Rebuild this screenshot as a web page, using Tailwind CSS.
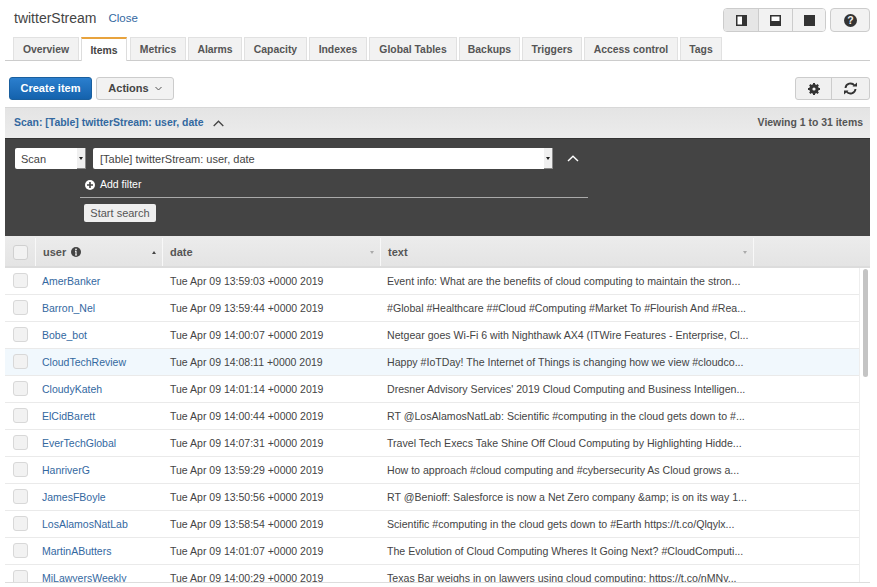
<!DOCTYPE html>
<html lang="en">
<head>
    <meta charset="UTF-8">
    <title>twitterStream</title>
    <script src="https://cdn.jsdelivr.net/npm/@tailwindcss/browser@4"></script>
</head>
<body class="bg-white font-['Liberation_Sans',Arial,sans-serif] text-[#444]">
<div class="w-[877px] h-[587px] overflow-hidden pl-[5px] pr-[7px]">

    <!-- Title bar -->
    <div class="h-[36px] flex items-start">
        <div class="flex items-center h-[36px] pl-[9px]">
            <span class="text-[14px] text-[#444]">twitterStream</span>
            <span class="text-[11.5px] pt-[2px] text-[#33689f] ml-[12px]">Close</span>
        </div>
        <div class="ml-auto mt-[8px] flex gap-[4px]">
            <div class="flex h-[24px] w-[103px] rounded-[4px] border border-[#ccc] overflow-hidden">
                <div class="w-[35px] bg-[#e6e6e6] flex items-center justify-center border-r border-[#ccc]">
                    <svg width="11" height="11" viewBox="0 0 11 11"><rect x="0.75" y="0.75" width="9.5" height="9.5" fill="#fff" stroke="#333" stroke-width="1.5"/><rect x="6" y="0" width="5" height="11" fill="#333"/></svg>
                </div>
                <div class="w-[34px] bg-[#f2f2f2] flex items-center justify-center border-r border-[#ccc]">
                    <svg width="11" height="11" viewBox="0 0 11 11"><rect x="0.75" y="0.75" width="9.5" height="9.5" fill="#fff" stroke="#333" stroke-width="1.5"/><rect x="0" y="6" width="11" height="5" fill="#333"/></svg>
                </div>
                <div class="flex-1 bg-[#f2f2f2] flex items-center justify-center">
                    <svg width="11" height="11" viewBox="0 0 11 11"><rect width="11" height="11" fill="#333"/></svg>
                </div>
            </div>
            <div class="h-[24px] w-[40px] rounded-[4px] border border-[#ccc] bg-[#f2f2f2] flex items-center justify-center">
                <svg width="13" height="13" viewBox="0 0 13 13"><circle cx="6.5" cy="6.5" r="6.5" fill="#333"/><text x="6.5" y="10.2" text-anchor="middle" fill="#f2f2f2" font-size="10.5" font-weight="700" font-family="Liberation Sans">?</text></svg>
            </div>
        </div>
    </div>

    <!-- Tabs -->
    <div class="h-[25px] flex items-end gap-[2px] pl-[8px] border-b border-[#ccc] text-[10.4px] font-bold text-[#555]">
        <div class="w-[66px] h-[23px] pt-[2px] bg-[#f2f2f2] border border-b-0 border-[#e1e1e1] flex items-center justify-center">Overview</div>
        <div class="w-[46px] h-[24px] pt-[2px] -mb-px bg-white border-t-2 border-t-[#e8a33d] border-x border-x-[#ddd] flex items-center justify-center text-[#444]">Items</div>
        <div class="ml-px w-[56px] h-[23px] pt-[2px] bg-[#f2f2f2] border border-b-0 border-[#e1e1e1] flex items-center justify-center">Metrics</div>
        <div class="w-[54px] h-[23px] pt-[2px] bg-[#f2f2f2] border border-b-0 border-[#e1e1e1] flex items-center justify-center">Alarms</div>
        <div class="w-[63px] h-[23px] pt-[2px] bg-[#f2f2f2] border border-b-0 border-[#e1e1e1] flex items-center justify-center">Capacity</div>
        <div class="w-[58px] h-[23px] pt-[2px] bg-[#f2f2f2] border border-b-0 border-[#e1e1e1] flex items-center justify-center">Indexes</div>
        <div class="w-[88px] h-[23px] pt-[2px] bg-[#f2f2f2] border border-b-0 border-[#e1e1e1] flex items-center justify-center">Global Tables</div>
        <div class="w-[61px] h-[23px] pt-[2px] bg-[#f2f2f2] border border-b-0 border-[#e1e1e1] flex items-center justify-center">Backups</div>
        <div class="w-[60px] h-[23px] pt-[2px] bg-[#f2f2f2] border border-b-0 border-[#e1e1e1] flex items-center justify-center">Triggers</div>
        <div class="w-[94px] h-[23px] pt-[2px] bg-[#f2f2f2] border border-b-0 border-[#e1e1e1] flex items-center justify-center">Access control</div>
        <div class="w-[42px] h-[23px] pt-[2px] bg-[#f2f2f2] border border-b-0 border-[#e1e1e1] flex items-center justify-center">Tags</div>
    </div>

    <!-- Toolbar -->
    <div class="h-[46px] flex items-start pl-[4px] pt-[16px]">
        <button class="w-[83px] h-[23px] rounded-[3px] bg-gradient-to-b from-[#2b7fce] to-[#1462ad] border border-[#1a5f9e] text-white text-[11px] font-bold">Create item</button>
        <button class="ml-[4px] w-[78px] h-[23px] rounded-[3px] bg-[#f2f2f2] border border-[#ccc] text-[#444] text-[11px] font-bold flex items-center justify-center gap-[6px]">
            Actions
            <svg width="7" height="5" viewBox="0 0 7 5"><path d="M0.5 1 L3.5 4 L6.5 1" fill="none" stroke="#555" stroke-width="1"/></svg>
        </button>
        <div class="ml-auto flex h-[23px] w-[75px] rounded-[3px] border border-[#ccc] bg-[#f0f0f0] overflow-hidden">
            <div class="w-[36px] border-r border-[#ccc] flex items-center justify-center">
                <svg width="12" height="12" viewBox="0 0 12 12"><circle cx="6" cy="6" r="3.6" fill="none" stroke="#333" stroke-width="2.4"/><path d="M6 0 V12 M0 6 H12 M1.8 1.8 L10.2 10.2 M10.2 1.8 L1.8 10.2" stroke="#333" stroke-width="2"/><circle cx="6" cy="6" r="1.6" fill="#f0f0f0"/></svg>
            </div>
            <div class="flex-1 flex items-center justify-center">
                <svg width="15" height="13" viewBox="0 0 15 13"><path d="M2.5 6 A5 5 0 0 1 11.5 3.5" fill="none" stroke="#333" stroke-width="1.9"/><path d="M12.5 7 A5 5 0 0 1 3.5 9.5" fill="none" stroke="#333" stroke-width="1.9"/><path d="M9.5 4.5 H14 V0.5 Z M5.5 8.5 H1 V12.5 Z" fill="#333"/></svg>
            </div>
        </div>
    </div>

    <!-- Scan bar -->
    <div class="h-[31px] bg-gradient-to-b from-[#e4e4e4] to-[#ececec] border-t border-[#d8d8d8] flex items-center pl-[9px] pr-[7px] text-[10.45px] font-bold">
        <span class="text-[#33689f]">Scan: [Table] twitterStream: user, date</span>
        <svg class="ml-[10px]" width="11" height="7" viewBox="0 0 11 7"><path d="M0.7 6 L5.5 1.2 L10.3 6" fill="none" stroke="#444" stroke-width="1.3"/></svg>
        <span class="ml-auto text-[#555]">Viewing 1 to 31 items</span>
    </div>

    <!-- Search panel -->
    <div class="h-[98px] bg-[#444] border-t border-[#333] pt-[9px]">
        <div class="flex items-center pl-[10px]">
            <div class="w-[71px] h-[21px] pt-[2px] bg-white rounded-[2px] flex items-center text-[11px] text-[#444] pl-[6px] relative">
                Scan
                <div class="absolute right-0 top-0 w-[9px] h-[21px] bg-[#f0f0f0] border-r border-b border-[#888] flex items-center justify-center"><div class="w-0 h-0 border-x-[2px] border-x-transparent border-t-[3px] border-t-[#222]"></div></div>
            </div>
            <div class="ml-[7px] w-[460px] h-[21px] pt-[2px] bg-white rounded-[2px] flex items-center text-[11px] text-[#444] pl-[7px] relative">
                [Table] twitterStream: user, date
                <div class="absolute right-0 top-0 w-[9px] h-[21px] bg-[#f0f0f0] border-r border-b border-[#888] flex items-center justify-center"><div class="w-0 h-0 border-x-[2px] border-x-transparent border-t-[3px] border-t-[#222]"></div></div>
            </div>
            <svg class="ml-[14px]" width="12" height="7" viewBox="0 0 12 7"><path d="M1 6 L6 1.2 L11 6" fill="none" stroke="#fff" stroke-width="1.4"/></svg>
        </div>
        <div class="ml-[80px] mt-[6px] h-[20px] flex items-center text-[10.5px] text-white">
            <svg width="10" height="10" viewBox="0 0 10 10"><circle cx="5" cy="5" r="5" fill="#fff"/><path d="M5 2 V8 M2 5 H8" stroke="#444" stroke-width="1.6"/></svg>
            <span class="ml-[5px]">Add filter</span>
        </div>
        <div class="ml-[75px] w-[508px] border-t border-[#aaa] mt-[2px]"></div>
        <button class="block ml-[79px] mt-[6px] w-[72px] h-[18px] rounded-[2px] bg-[#eee] text-[11px] text-[#555]">Start search</button>
    </div>

    <!-- Table header -->
    <div class="h-[32px] pt-[2px] flex bg-gradient-to-b from-[#ececec] to-[#e4e4e4] border-b-2 border-[#dcdcdc] text-[11px] font-bold text-[#555]">
        <div class="w-[30px] flex items-center justify-center"><div class="w-[15px] h-[15px] rounded-[3px] bg-[#f2f2f2] border border-[#d0d0d0]"></div></div>
        <div class="w-[127px] flex items-center pl-[7px] pr-[6px] border-l border-[#f8f8f8]">
            <span>user</span>
            <svg class="ml-[5px]" width="10" height="10" viewBox="0 0 10 10"><circle cx="5" cy="5" r="5" fill="#444"/><path d="M5 4 V8 M4 4.3 H5 M4 8 H6" stroke="#eee" stroke-width="1.2"/><circle cx="5" cy="2.4" r="0.9" fill="#eee"/></svg>
            <div class="ml-auto w-0 h-0 border-x-[2.5px] border-x-transparent border-b-[3px] border-b-[#444]"></div>
        </div>
        <div class="w-[218px] flex items-center pl-[7px] pr-[6px] border-l border-[#f8f8f8]">
            <span>date</span>
            <div class="ml-auto w-0 h-0 border-x-[2.5px] border-x-transparent border-t-[3px] border-t-[#aaa]"></div>
        </div>
        <div class="w-[374px] flex items-center pl-[7px] pr-[6px] border-x border-[#f8f8f8]">
            <span>text</span>
            <div class="ml-auto w-0 h-0 border-x-[2.5px] border-x-transparent border-t-[3px] border-t-[#aaa]"></div>
        </div>
    </div>

    <!-- Table body -->
    <div class="relative h-[315px] overflow-hidden border-b border-[#ddd]">
        <div id="rows"></div>
        <!-- scrollbar -->
        <div class="absolute top-0 right-0 bottom-0 w-[11px] bg-white border-l border-[#eee]">
            <div class="mt-[1px] ml-[3px] w-[5px] h-[108px] rounded-[3px] bg-[#c4c4c4]"></div>
        </div>
    </div>
</div>

<script>
    const items = [
        ['AmerBanker', 'Tue Apr 09 13:59:03 +0000 2019', 'Event info: What are the benefits of cloud computing to maintain the stron...'],
        ['Barron_Nel', 'Tue Apr 09 13:59:44 +0000 2019', '#Global #Healthcare ##Cloud #Computing #Market To #Flourish And #Rea...'],
        ['Bobe_bot', 'Tue Apr 09 14:00:07 +0000 2019', 'Netgear goes Wi-Fi 6 with Nighthawk AX4 (ITWire Features - Enterprise, Cl...'],
        ['CloudTechReview', 'Tue Apr 09 14:08:11 +0000 2019', 'Happy #IoTDay! The Internet of Things is changing how we view #cloudco...'],
        ['CloudyKateh', 'Tue Apr 09 14:01:14 +0000 2019', "Dresner Advisory Services' 2019 Cloud Computing and Business Intelligen..."],
        ['ElCidBarett', 'Tue Apr 09 14:00:44 +0000 2019', 'RT @LosAlamosNatLab: Scientific #computing in the cloud gets down to #...'],
        ['EverTechGlobal', 'Tue Apr 09 14:07:31 +0000 2019', 'Travel Tech Execs Take Shine Off Cloud Computing by Highlighting Hidde...'],
        ['HanriverG', 'Tue Apr 09 13:59:29 +0000 2019', 'How to approach #cloud computing and #cybersecurity As Cloud grows a...'],
        ['JamesFBoyle', 'Tue Apr 09 13:50:56 +0000 2019', 'RT @Benioff: Salesforce is now a Net Zero company &amp;amp; is on its way 1...'],
        ['LosAlamosNatLab', 'Tue Apr 09 13:58:54 +0000 2019', 'Scientific #computing in the cloud gets down to #Earth https://t.co/Qlqylx...'],
        ['MartinAButters', 'Tue Apr 09 14:01:07 +0000 2019', 'The Evolution of Cloud Computing Wheres It Going Next? #CloudComputi...'],
        ['MiLawyersWeekly', 'Tue Apr 09 14:00:29 +0000 2019', 'Texas Bar weighs in on lawyers using cloud computing: https://t.co/nMNv...'],
    ]
    document.getElementById('rows').innerHTML = items.map((row, i) => `
        <div class="h-[27px] flex items-center border-b border-[#eaeaea] ${i == 3 ? 'bg-[#f1f8fd]' : ''}">
            <div class="w-[30px] pb-[1px] flex justify-center"><div class="w-[15px] h-[15px] rounded-[3px] bg-[#f2f2f2] border border-[#d8d8d8]"></div></div>
            <a class="w-[128px] pt-[2px] pl-[7px] text-[10.5px] text-[#33689f]">${row[0]}</a>
            <div class="w-[218px] pt-[2px] pl-[7px] text-[10.5px]">${row[1]}</div>
            <div class="w-[374px] pt-[2px] pl-[6px] text-[10.6px] whitespace-nowrap">${row[2]}</div>
        </div>`).join('')
</script>
</body>
</html>
